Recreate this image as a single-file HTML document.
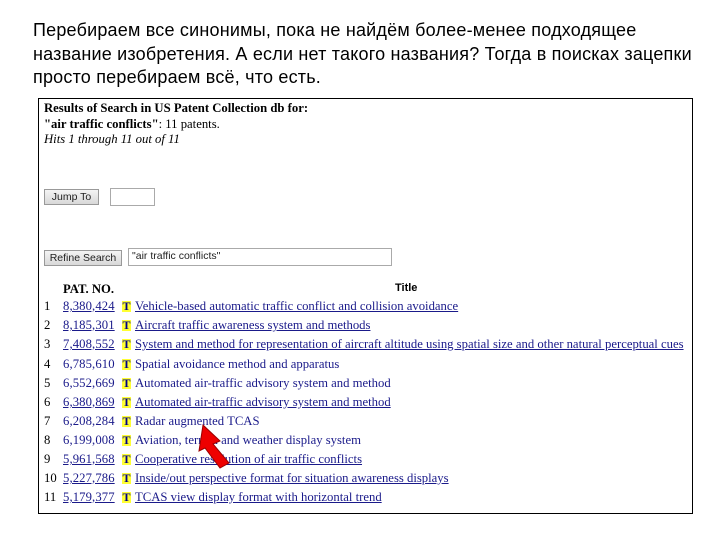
<!DOCTYPE html>
<html><head><meta charset="utf-8"><style>
body{margin:0;width:720px;height:540px;background:#fff;position:relative;overflow:hidden;font-family:"Liberation Serif",serif}
.h{position:absolute;left:33px;top:19px;font:18px/23.5px "Liberation Sans",sans-serif;letter-spacing:0.2px;color:#000;white-space:nowrap}
.f{position:absolute;left:38px;top:98px;width:655px;height:416px;border:1.5px solid #000;box-sizing:border-box}
.a{position:absolute;white-space:nowrap;font-size:12.7px;color:#000}
.btn{position:absolute;background:linear-gradient(#f4f4f4,#d8d8d8);border:1px solid #999;font:10.5px "Liberation Sans",sans-serif;color:#222;text-align:center;box-sizing:border-box;line-height:14px}
.in{position:absolute;border:1px solid #aaa;background:#fff;box-sizing:border-box;font:10.5px "Liberation Sans",sans-serif;padding-left:3px;line-height:14px;color:#222}
.r{position:absolute;left:44px;height:19px;font-size:12.7px;white-space:nowrap;color:#1a1a8a}
.r span{position:absolute}
.n{left:0;color:#000}.p{left:19px;letter-spacing:0.1px}.t{left:78px;width:9px;height:11px;background:#ff3;color:#008;font-weight:bold;font-size:12px;line-height:11px;top:2px;text-align:center}.ti{left:91px}
.u{text-decoration:underline}
</style></head><body>
<div class="h">Перебираем все синонимы, пока не найдём более-менее подходящее<br>название изобретения. А если нет такого названия? Тогда в поисках зацепки<br>просто перебираем всё, что есть.</div>
<div class="f"></div>
<div class="a" style="left:44px;top:101px;font-weight:bold">Results of Search in US Patent Collection db for:</div>
<div class="a" style="left:44px;top:117px"><b>"air traffic conflicts"</b>: 11 patents.</div>
<div class="a" style="left:44px;top:132px;font-style:italic">Hits 1 through 11 out of 11</div>
<div class="btn" style="left:44px;top:189px;width:55px;height:16px">Jump To</div>
<div class="in" style="left:110px;top:188px;width:45px;height:18px"></div>
<div class="btn" style="left:44px;top:250px;width:78px;height:16px">Refine Search</div>
<div class="in" style="left:128px;top:248px;width:264px;height:18px">"air traffic conflicts"</div>
<div class="a" style="left:63px;top:282px;font-weight:bold">PAT. NO.</div>
<div class="a" style="left:395px;top:282px;font-weight:bold;font-family:'Liberation Sans',sans-serif;font-size:11px">Title</div>
<div class="r" style="top:299px"><span class="n">1</span><span class="p u">8,380,424</span><span class="t">T</span><span class="ti u">Vehicle-based automatic traffic conflict and collision avoidance</span></div>
<div class="r" style="top:318px"><span class="n">2</span><span class="p u">8,185,301</span><span class="t">T</span><span class="ti u">Aircraft traffic awareness system and methods</span></div>
<div class="r" style="top:337px"><span class="n">3</span><span class="p u">7,408,552</span><span class="t">T</span><span class="ti u">System and method for representation of aircraft altitude using spatial size and other natural perceptual cues</span></div>
<div class="r" style="top:357px"><span class="n">4</span><span class="p">6,785,610</span><span class="t">T</span><span class="ti">Spatial avoidance method and apparatus</span></div>
<div class="r" style="top:376px"><span class="n">5</span><span class="p">6,552,669</span><span class="t">T</span><span class="ti">Automated air-traffic advisory system and method</span></div>
<div class="r" style="top:395px"><span class="n">6</span><span class="p u">6,380,869</span><span class="t">T</span><span class="ti u">Automated air-traffic advisory system and method</span></div>
<div class="r" style="top:414px"><span class="n">7</span><span class="p">6,208,284</span><span class="t">T</span><span class="ti">Radar augmented TCAS</span></div>
<div class="r" style="top:433px"><span class="n">8</span><span class="p">6,199,008</span><span class="t">T</span><span class="ti">Aviation, terrain and weather display system</span></div>
<div class="r" style="top:452px"><span class="n">9</span><span class="p u">5,961,568</span><span class="t">T</span><span class="ti u">Cooperative resolution of air traffic conflicts</span></div>
<div class="r" style="top:471px"><span class="n">10</span><span class="p u">5,227,786</span><span class="t">T</span><span class="ti u">Inside/out perspective format for situation awareness displays</span></div>
<div class="r" style="top:490px"><span class="n">11</span><span class="p u">5,179,377</span><span class="t">T</span><span class="ti u">TCAS view display format with horizontal trend</span></div>
<svg style="position:absolute;left:0;top:0" width="720" height="540"><polygon points="203,425 220,441 213,444 229,463 220,468 205,448 199,451" fill="#e00" stroke="#900" stroke-width="1"/></svg>
</body></html>
